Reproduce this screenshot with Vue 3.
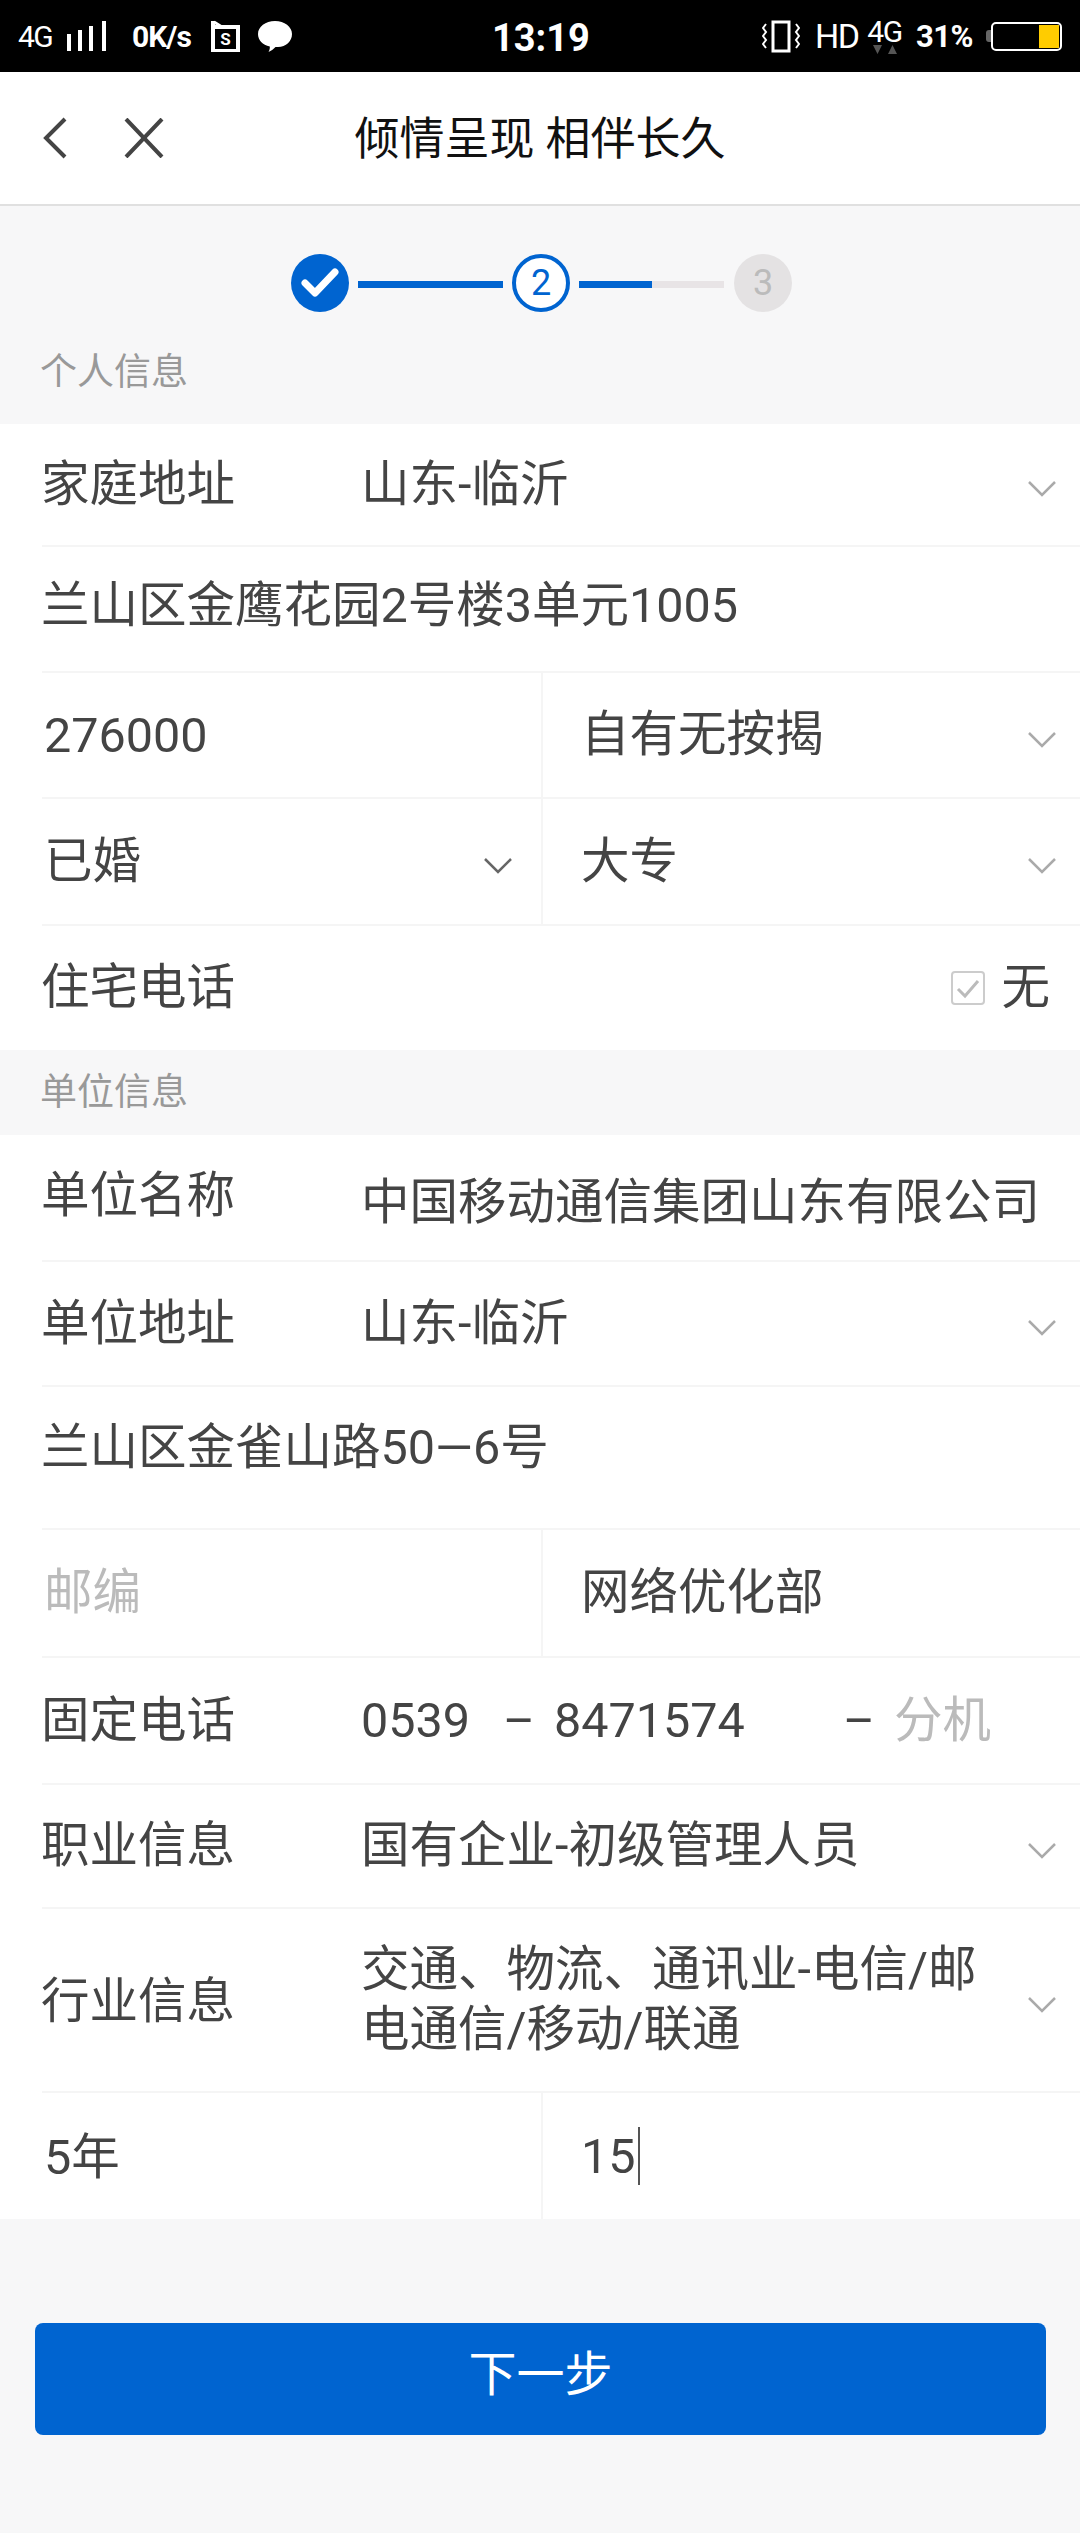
<script setup>
</script>

<template>
  <div class="page">
    <div class="status">
      <div class="st-left">
        <span class="st-4g">4G</span>
        <svg class="st-signal" width="40" height="30" viewBox="0 0 40 30"><path d="M2 13v17M13 9v21M24 5v25M37 0v30" stroke="#fff" stroke-width="4" fill="none"/></svg>
        <span class="st-speed">0K/s</span>
        <svg class="st-s" width="30" height="32" viewBox="0 0 30 32"><path d="M3 7h25v24H3zM3 7V1" stroke="#fff" stroke-width="4" fill="none"/><path d="M4 2l8 5" stroke="#fff" stroke-width="3"/><text x="15.500" y="25" font-size="17" font-family="Roboto, sans-serif" font-weight="700" fill="#fff" text-anchor="middle">S</text></svg>
        <svg class="st-bubble" width="34" height="31" viewBox="0 0 34 31"><path d="M17 0C26.500 0 34 5.800 34 13s-6 13-14 13c-1 0-2 0-2.500 0C15.500 28 13 30 10.500 31c1-1.700 1.500-3.600 1.300-5.500C4.500 24 0 19 0 13 0 5.800 7.500 0 17 0z" fill="#fff"/></svg>
      </div>
      <div class="st-time">13:19</div>
      <div class="st-right">
        <svg class="st-vib" width="38" height="33" viewBox="0 0 38 33"><rect x="11" y="2" width="16" height="29" fill="none" stroke="#fff" stroke-width="3"/><path d="M4 4l-3 4 3 4-3 4 3 4-3 4 3 4M34 4l3 4-3 4 3 4-3 4 3 4-3 4" fill="none" stroke="#fff" stroke-width="2"/></svg>
        <span class="st-hd">HD</span>
        <div class="st-net">
          <span class="st-4g2">4G</span>
          <svg width="24" height="9" viewBox="0 0 24 9"><path d="M0 0h9L4.500 9zM15 9l4.500-9L24 9z" fill="#555"/></svg>
        </div>
        <span class="st-pct">31%</span>
        <div class="st-nub"></div>
        <div class="st-batt"><div class="st-fill"></div></div>
      </div>
    </div>

    <div class="nav">
      <svg class="nav-back" width="28" height="42" viewBox="0 0 28 42"><path d="M24 2L5 21l19 19" fill="none" stroke="#444" stroke-width="4"/></svg>
      <svg class="nav-close" width="40" height="40" viewBox="0 0 40 40"><path d="M2 1l36 38M38 1L2 39" fill="none" stroke="#444" stroke-width="4"/></svg>
      <div class="nav-title">倾情呈现 相伴长久</div>
    </div>

    <div class="steps">
      <div class="dot dot-done">
        <svg width="38" height="30" viewBox="0 0 38 30"><path d="M4 15l10 10L34 4" fill="none" stroke="#fff" stroke-width="7" stroke-linecap="round" stroke-linejoin="round"/></svg>
      </div>
      <div class="line"><div class="line-full"></div></div>
      <div class="dot dot-cur">2</div>
      <div class="line"><div class="line-half"></div></div>
      <div class="dot dot-todo">3</div>
    </div>

    <div class="sec sec-a">个人信息</div>
    <div class="group">
      <div class="row r123"><span class="label">家庭地址</span><span class="val">山东-临沂</span><svg class="chev" width="30" height="17" viewBox="0 0 30 17"><path d="M2 2l13 13L28 2" fill="none" stroke="#aaa" stroke-width="2.500"/></svg></div>
      <div class="row r126"><span class="text text-hi">兰山区金鹰花园2号楼3单元1005</span></div>
      <div class="row r126">
        <div class="cell cell-l"><span class="num">276000</span></div>
        <div class="cell cell-r"><span class="text">自有无按揭</span><svg class="chev" width="30" height="17" viewBox="0 0 30 17"><path d="M2 2l13 13L28 2" fill="none" stroke="#aaa" stroke-width="2.500"/></svg></div>
      </div>
      <div class="row r127">
        <div class="cell cell-l"><span class="text">已婚</span><svg class="chev" width="30" height="17" viewBox="0 0 30 17"><path d="M2 2l13 13L28 2" fill="none" stroke="#666" stroke-width="2.500"/></svg></div>
        <div class="cell cell-r"><span class="text">大专</span><svg class="chev" width="30" height="17" viewBox="0 0 30 17"><path d="M2 2l13 13L28 2" fill="none" stroke="#aaa" stroke-width="2.500"/></svg></div>
      </div>
      <div class="row r124 row-last">
        <span class="label">住宅电话</span>
        <svg class="check" width="34" height="34" viewBox="0 0 34 34"><rect x="1" y="1" width="32" height="32" rx="3" fill="#fff" stroke="#ccc" stroke-width="2"/><path d="M7 18l7 7L27 10" fill="none" stroke="#bbb" stroke-width="3"/></svg>
        <span class="none">无</span>
      </div>
    </div>

    <div class="sec sec-b">单位信息</div>
    <div class="group">
      <div class="row r127"><span class="label up">单位名称</span><span class="val down">中国移动通信集团山东有限公司</span></div>
      <div class="row r125"><span class="label">单位地址</span><span class="val">山东-临沂</span><svg class="chev" width="30" height="17" viewBox="0 0 30 17"><path d="M2 2l13 13L28 2" fill="none" stroke="#aaa" stroke-width="2.500"/></svg></div>
      <div class="row r143 row-top"><span class="top-text">兰山区金雀山路50—6号</span></div>
      <div class="row r128">
        <div class="cell cell-l"><span class="text ph">邮编</span></div>
        <div class="cell cell-r"><span class="text">网络优化部</span></div>
      </div>
      <div class="row r127">
        <span class="label">固定电话</span>
        <span class="num p1">0539</span>
        <span class="num p2">–</span>
        <span class="num p3">8471574</span>
        <span class="num p4">–</span>
        <span class="text ph">分机</span>
      </div>
      <div class="row r124"><span class="label">职业信息</span><span class="val">国有企业-初级管理人员</span><svg class="chev" width="30" height="17" viewBox="0 0 30 17"><path d="M2 2l13 13L28 2" fill="none" stroke="#aaa" stroke-width="2.500"/></svg></div>
      <div class="row r184"><span class="label label-lo">行业信息</span><span class="two">交通、物流、通讯业-电信/邮<br>电通信/移动/联通</span><svg class="chev" width="30" height="17" viewBox="0 0 30 17"><path d="M2 2l13 13L28 2" fill="none" stroke="#aaa" stroke-width="2.500"/></svg></div>
      <div class="row r126 row-last">
        <div class="cell cell-l"><span class="text text-lo">5年</span></div>
        <div class="cell cell-r"><span class="num">15</span><span class="caret"></span></div>
      </div>
    </div>

    <div class="foot">
      <div class="btn"><span class="btn-text">下一步</span></div>
    </div>
  </div>
</template>

<style scoped>
.page {
  width: 1080px;
  height: 2533px;
  background: #f7f7f8;
  font-family: Roboto, "Noto Sans CJK SC", sans-serif;
  color: #444;
  overflow: hidden;
}
.status {
  height: 72px;
  background: #000;
  color: #fff;
  display: grid;
  grid-template-columns: 492px 97px 1fr;
  align-items: center;
}
.st-left { display: flex; align-items: center; padding-left: 18px; }
.st-4g { font-size: 30px; width: 36px; margin-right: 13px; letter-spacing: -1.500px; }
.st-signal { margin-right: 25px; }
.st-speed { font-size: 30px; font-weight: 700; width: 68px; margin-right: 10px; letter-spacing: -1px; white-space: nowrap; }
.st-s { margin-right: 18px; }
.st-time { font-size: 38px; font-weight: 700; white-space: nowrap; text-align: center; padding-top: 4px; }
.st-right { display: flex; align-items: center; padding-left: 173px; }
.st-vib { margin-right: 15px; }
.st-hd { font-size: 34px; width: 40px; margin-right: 12px; letter-spacing: -1.500px; }
.st-net { width: 35px; margin-right: 14px; display: flex; flex-direction: column; align-items: center; }
.st-4g2 { font-size: 30px; line-height: 26px; letter-spacing: -1.500px; white-space: nowrap; }
.st-pct { font-size: 31px; font-weight: 700; width: 60px; margin-right: 10px; letter-spacing: -0.500px; white-space: nowrap; }
.st-nub { width: 5px; height: 12px; background: #666; border-radius: 3px 0 0 3px; }
.st-batt {
  width: 71px;
  height: 29px;
  box-sizing: border-box;
  border: 2px solid #fff;
  border-radius: 5px;
  padding: 1px;
  display: flex;
  justify-content: flex-end;
}
.st-fill { width: 20px; background: #ffcc00; }

.nav {
  height: 132px;
  box-sizing: content-box;
  background: #fff;
  border-bottom: 2px solid #e0e0e0;
  display: flex;
  align-items: center;
  position: relative;
}
.nav-back { margin-left: 41px; }
.nav-close { margin-left: 55px; }
.nav-title {
  position: absolute;
  left: 0;
  right: 0;
  text-align: center;
  font-size: 45px;
  color: #111;
  padding-bottom: 6px;
  pointer-events: none;
}

.steps {
  display: flex;
  align-items: center;
  gap: 9px;
  padding-top: 48px;
  padding-left: 291px;
}
.dot {
  width: 58px;
  height: 58px;
  box-sizing: border-box;
  border-radius: 50%;
  display: flex;
  align-items: center;
  justify-content: center;
  font-size: 36px;
}
.dot-done { background: #0064d0; }
.dot-cur { background: #fff; border: 4px solid #0064d0; color: #0064d0; }
.dot-todo { background: #e4e2e3; color: #bbb; margin-left: 1px; }
.line { width: 145px; height: 7px; background: #e8e4e6; margin-top: 2px; }
.line-full { width: 100%; height: 100%; background: #0064d0; }
.line-half { width: 50%; height: 100%; background: #0064d0; }

.sec { font-size: 37px; color: #999; padding-left: 40px; line-height: 52px; }
.sec-a { padding-top: 35px; padding-bottom: 25px; }
.sec-b { height: 85px; line-height: 85px; }

.group { background: #fff; }
.row {
  box-sizing: border-box;
  margin-left: 42px;
  border-bottom: 2px solid #f5f5f5;
  display: flex;
  align-items: center;
  font-size: 48.500px;
  padding-right: 23px;
}
.row-last { border-bottom: 0; }
.r123 { height: 123px; }
.r124 { height: 124px; }
.r125 { height: 125px; }
.r126 { height: 126px; }
.r127 { height: 127px; }
.r128 { height: 128px; }
.r143 { height: 143px; }
.r184 { height: 184px; }
.row-top { align-items: flex-start; padding-top: 21px; }

.label { width: 320px; flex: none; white-space: nowrap; margin-bottom: 10px; margin-left: -1px; }
.label-lo { margin-bottom: 6px; }
.val { white-space: nowrap; margin-bottom: 10px; }
.text { white-space: nowrap; margin-bottom: 10px; }
.text-hi { margin-bottom: 16px; margin-left: -1px; }
.text-lo { margin-bottom: 6px; }
.top-text { white-space: nowrap; margin-left: -1px; }
.num { white-space: nowrap; }
.up { margin-bottom: 14px; }
.down { margin-bottom: 0; margin-top: 0; }
.two { line-height: 60px; white-space: nowrap; }
.ph { color: #bbb; }
.chev { margin-left: auto; margin-top: 8px; flex: none; }

.cell {
  display: flex;
  align-items: center;
  height: 100%;
  box-sizing: border-box;
}
.cell-l {
  width: 501px;
  flex: none;
  padding-left: 2px;
  padding-right: 28px;
  border-right: 2px solid #f5f5f5;
}
.cell-r { flex: 1; padding-left: 38px; }

.check { margin-left: auto; margin-right: 16px; flex: none; }
.none { margin-right: 7px; margin-bottom: 10px; }

.p1 { width: 142px; flex: none; }
.p2 { width: 51px; flex: none; }
.p3 { width: 289px; flex: none; }
.p4 { width: 51px; flex: none; }

.caret { width: 2px; height: 58px; background: #555; margin-left: 2px; }

.foot { padding: 104px 34px 0 35px; }
.btn {
  height: 112px;
  background: #0064d0;
  border-radius: 8px;
  color: #fff;
  font-size: 48px;
  display: flex;
  align-items: center;
  justify-content: center;
}
.btn-text { margin-bottom: 18px; }
</style>
